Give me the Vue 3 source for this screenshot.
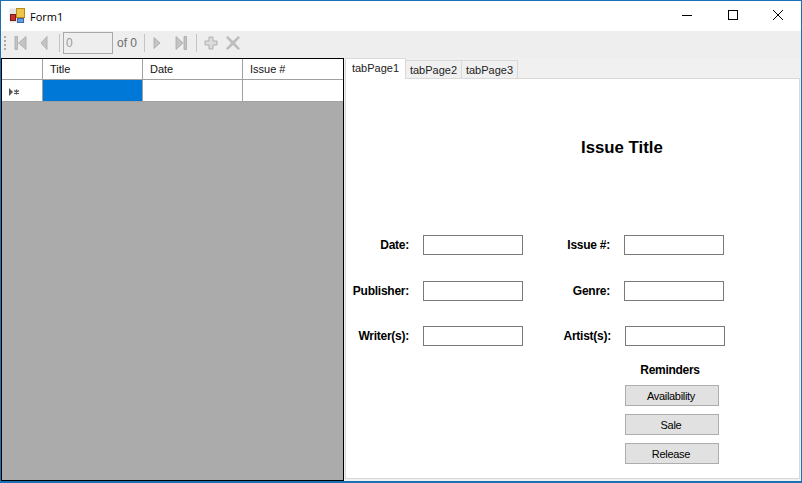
<script setup>
const columns = ['Title', 'Date', 'Issue #']
const tabs = ['tabPage1', 'tabPage2', 'tabPage3']
const fieldRows = [
  [{ label: 'Date:' }, { label: 'Issue #:' }],
  [{ label: 'Publisher:' }, { label: 'Genre:' }],
  [{ label: 'Writer(s):' }, { label: 'Artist(s):', shifted: true }],
]
const reminders = ['Availability', 'Sale', 'Release']
</script>

<template>
  <div class="window">
    <header class="titlebar">
      <svg class="app-icon" width="16" height="16" viewBox="0 0 16 16">
        <rect x="0.5" y="0.5" width="15" height="14" fill="#e4e4e4" />
        <rect x="7.500" y="0.500" width="8" height="9" fill="#eec545" stroke="#b98a20" />
        <rect x="1.500" y="6.500" width="5" height="6" fill="#c8322a" stroke="#7c1c18" />
        <rect x="8.500" y="10.500" width="6" height="4" fill="#6d9be0" stroke="#3a64a8" />
      </svg>
      <span class="title">Form1</span>
      <div class="controls">
        <svg class="minimize" width="12" height="12" viewBox="0 0 12 12"><path d="M1 6.500h10" stroke="#000" /></svg>
        <svg width="12" height="12" viewBox="0 0 12 12"><rect x="1.500" y="1.500" width="9" height="9" fill="none" stroke="#000" /></svg>
        <svg width="12" height="12" viewBox="0 0 12 12"><path d="M1 1l10 10M11 1L1 11" stroke="#000" /></svg>
      </div>
    </header>

    <div class="toolbar">
      <span class="grip"></span>
      <svg class="first" width="14" height="14" viewBox="0 0 14 14"><path d="M1 0.500h2.500v13H1zM12 0.500v13L4.500 7z" fill="#c4c4c4" stroke="#a8a8a8" stroke-width="0.800" /></svg>
      <svg class="prev" width="10" height="14" viewBox="0 0 10 14"><path d="M8 0.500v13L2 7z" fill="#c4c4c4" stroke="#a8a8a8" stroke-width="0.800" /></svg>
      <span class="sep sep-a"></span>
      <span class="position">0</span>
      <span class="of">of 0</span>
      <span class="sep"></span>
      <svg class="next" width="10" height="14" viewBox="0 0 10 14"><path d="M2 1.500v11l6-5.500z" fill="#c4c4c4" stroke="#a8a8a8" stroke-width="0.800" /></svg>
      <svg class="last" width="14" height="14" viewBox="0 0 14 14"><path d="M2 0.500v13l7-6.500zM10 0.500h2.500v13H10z" fill="#c4c4c4" stroke="#a8a8a8" stroke-width="0.800" /></svg>
      <span class="sep sep-c"></span>
      <svg class="add" width="14" height="14" viewBox="0 0 14 14"><path d="M5 1h4v4h4v4H9v4H5V9H1V5h4z" fill="#dcdcdc" stroke="#b0b0b0" /></svg>
      <svg class="del" width="16" height="14" viewBox="0 0 16 14"><path d="M1 1.500L2.800 0 8 5 13.200 0 15 1.500 10 7l5 5.500L13.200 14 8 9l-5.200 5L1 12.500 6 7z" fill="#bdbdbd" /></svg>
    </div>

    <div class="content">
      <section class="grid">
        <div class="row head">
          <div class="cell corner"></div>
          <div v-for="col in columns" :key="col" class="cell">{{ col }}</div>
        </div>
        <div class="row new">
          <div class="cell corner marker">
            <svg width="14" height="8" viewBox="0 0 14 8">
              <path d="M1 0v8l4-4z" fill="#555" />
              <path d="M8.500 1.500v5M6 2.500l5 3M11 2.500l-5 3" stroke="#555" stroke-width="1.300" />
            </svg>
          </div>
          <div class="cell selected"></div>
          <div class="cell"></div>
          <div class="cell"></div>
        </div>
      </section>

      <section class="tabs">
        <div class="tab-strip">
          <div v-for="(tab, i) in tabs" :key="tab" class="tab" :class="{ active: i === 0 }">{{ tab }}</div>
        </div>
        <div class="panel">
          <h1 class="issue-title">Issue Title</h1>
          <div class="fields">
            <div v-for="(row, r) in fieldRows" :key="r" class="field-row">
              <div v-for="f in row" :key="f.label" class="field" :class="{ shifted: f.shifted }">
                <label>{{ f.label }}</label>
                <input type="text" />
              </div>
            </div>
          </div>
          <div class="reminders">
            <div class="reminders-title">Reminders</div>
            <button v-for="r in reminders" :key="r" type="button">{{ r }}</button>
          </div>
        </div>
      </section>
    </div>
  </div>
</template>

<style>
html, body {
  margin: 0;
  overflow: hidden;
}
</style>

<style scoped>
.window {
  box-sizing: border-box;
  width: 802px;
  height: 483px;
  border: 1px solid #1c70b5;
  border-bottom-width: 2px;
  background: #f0f0f0;
  display: flex;
  flex-direction: column;
  font-family: "Liberation Sans", Arial, sans-serif;
  font-size: 11px;
  color: #000;
}

.titlebar {
  height: 30px;
  flex: none;
  background: #fff;
  display: flex;
  align-items: center;
  padding-left: 8px;
}

.app-icon {
  margin-top: -1px;
}

.title {
  margin-left: 5px;
  font-family: "Open Sans", sans-serif;
  font-size: 11px;
}

.controls {
  margin-left: auto;
  margin-top: -2px;
  display: flex;
  gap: 33px;
  padding-right: 17px;
}

.minimize {
  margin-right: 1px;
}

.toolbar {
  box-sizing: border-box;
  height: 27px;
  flex: none;
  background: #eeeeee;
  display: flex;
  align-items: center;
  padding: 0 0 3px 3px;
}

.toolbar svg {
  flex: none;
}

.grip {
  width: 2px;
  height: 14px;
  background: repeating-linear-gradient(to bottom, #a8a8a8 0 2px, transparent 2px 4px);
}

.first {
  margin-left: 8px;
}

.prev {
  margin-left: 11px;
}

.sep {
  width: 1px;
  height: 18px;
  background: #c4c4c4;
}

.sep-a {
  margin-left: 10px;
}

.position {
  box-sizing: border-box;
  width: 50px;
  height: 22px;
  margin-left: 3px;
  border: 1px solid #a9a9a9;
  color: #9a9a9a;
  font-size: 12px;
  line-height: 20px;
  padding-left: 2px;
}

.of {
  width: 27px;
  margin-left: 4px;
  color: #6d6d6d;
  font-size: 12px;
}

.next {
  margin-left: 7px;
}

.last {
  margin-left: 12px;
}

.sep-c {
  margin-left: 8px;
}

.add {
  margin-left: 7px;
}

.del {
  margin-left: 7px;
}

.content {
  flex: 1;
  min-height: 0;
  display: flex;
}

.grid {
  box-sizing: border-box;
  width: 343px;
  flex: none;
  border: 1px solid #000;
  background: #ababab;
}

.row {
  display: grid;
  grid-template-columns: 41px 100px 100px 100px;
  background: #fff;
}

.cell {
  box-sizing: border-box;
  border-right: 1px solid #a0a0a0;
  border-bottom: 1px solid #a0a0a0;
  padding-left: 7px;
}

.cell:last-child {
  border-right: none;
}

.head .cell {
  height: 21px;
  line-height: 21px;
  color: #111;
}

.new .cell {
  height: 22px;
}

.marker {
  display: flex;
  align-items: center;
  padding: 2px 0 0 6px;
}

.selected {
  background: #0078d7;
}

.tabs {
  flex: 1;
  display: flex;
  flex-direction: column;
  padding: 0 1px 2px 1px;
  min-width: 0;
}

.tab-strip {
  height: 20px;
  flex: none;
  display: flex;
  align-items: flex-end;
}

.tab {
  box-sizing: border-box;
  height: 18px;
  width: 56px;
  text-align: center;
  line-height: 18px;
  color: #222;
  background: #f0f0f0;
  border: 1px solid #d9d9d9;
  border-left: none;
  border-bottom: none;
}

.tab.active {
  width: 61px;
  height: 21px;
  margin-bottom: -1px;
  line-height: 19px;
  background: #fff;
  border-left: 1px solid #d9d9d9;
  position: relative;
  z-index: 1;
}

.panel {
  flex: 1;
  min-height: 0;
  background: #fff;
  border: 1px solid #d9d9d9;
  display: flex;
  flex-direction: column;
}

.issue-title {
  margin: 60px 0 0 235px;
  font-size: 16.8px;
  line-height: 18px;
  font-weight: bold;
}

.fields {
  margin-top: 78px;
  display: flex;
  flex-direction: column;
  gap: 26px;
}

.field-row {
  display: grid;
  grid-template-columns: 177px 201px;
  height: 20px;
}

.field-row + .field-row + .field-row {
  margin-top: -1px;
}

.field {
  display: flex;
  align-items: center;
  justify-content: flex-end;
  gap: 14px;
}

.field label {
  font-weight: bold;
  font-size: 12px;
  letter-spacing: -0.25px;
}

.field input {
  box-sizing: border-box;
  width: 100px;
  height: 20px;
  margin: 0;
  border: 1px solid #7a7a7a;
  background: #fff;
}

.field.shifted input {
  margin-right: -1px;
}

.reminders {
  margin: 16px 0 0 279px;
  width: 94px;
  display: flex;
  flex-direction: column;
  align-items: center;
}

.reminders-title {
  font-weight: bold;
  font-size: 12px;
  letter-spacing: -0.3px;
  line-height: 16px;
  margin: 0 4px 7px 0;
}

.reminders button {
  box-sizing: border-box;
  width: 94px;
  height: 21px;
  margin-bottom: 8px;
  padding: 0 2px 0 0;
  border: 1px solid #adadad;
  background: #e1e1e1;
  font-family: inherit;
  font-size: 11px;
  letter-spacing: -0.3px;
  color: #000;
}
</style>
